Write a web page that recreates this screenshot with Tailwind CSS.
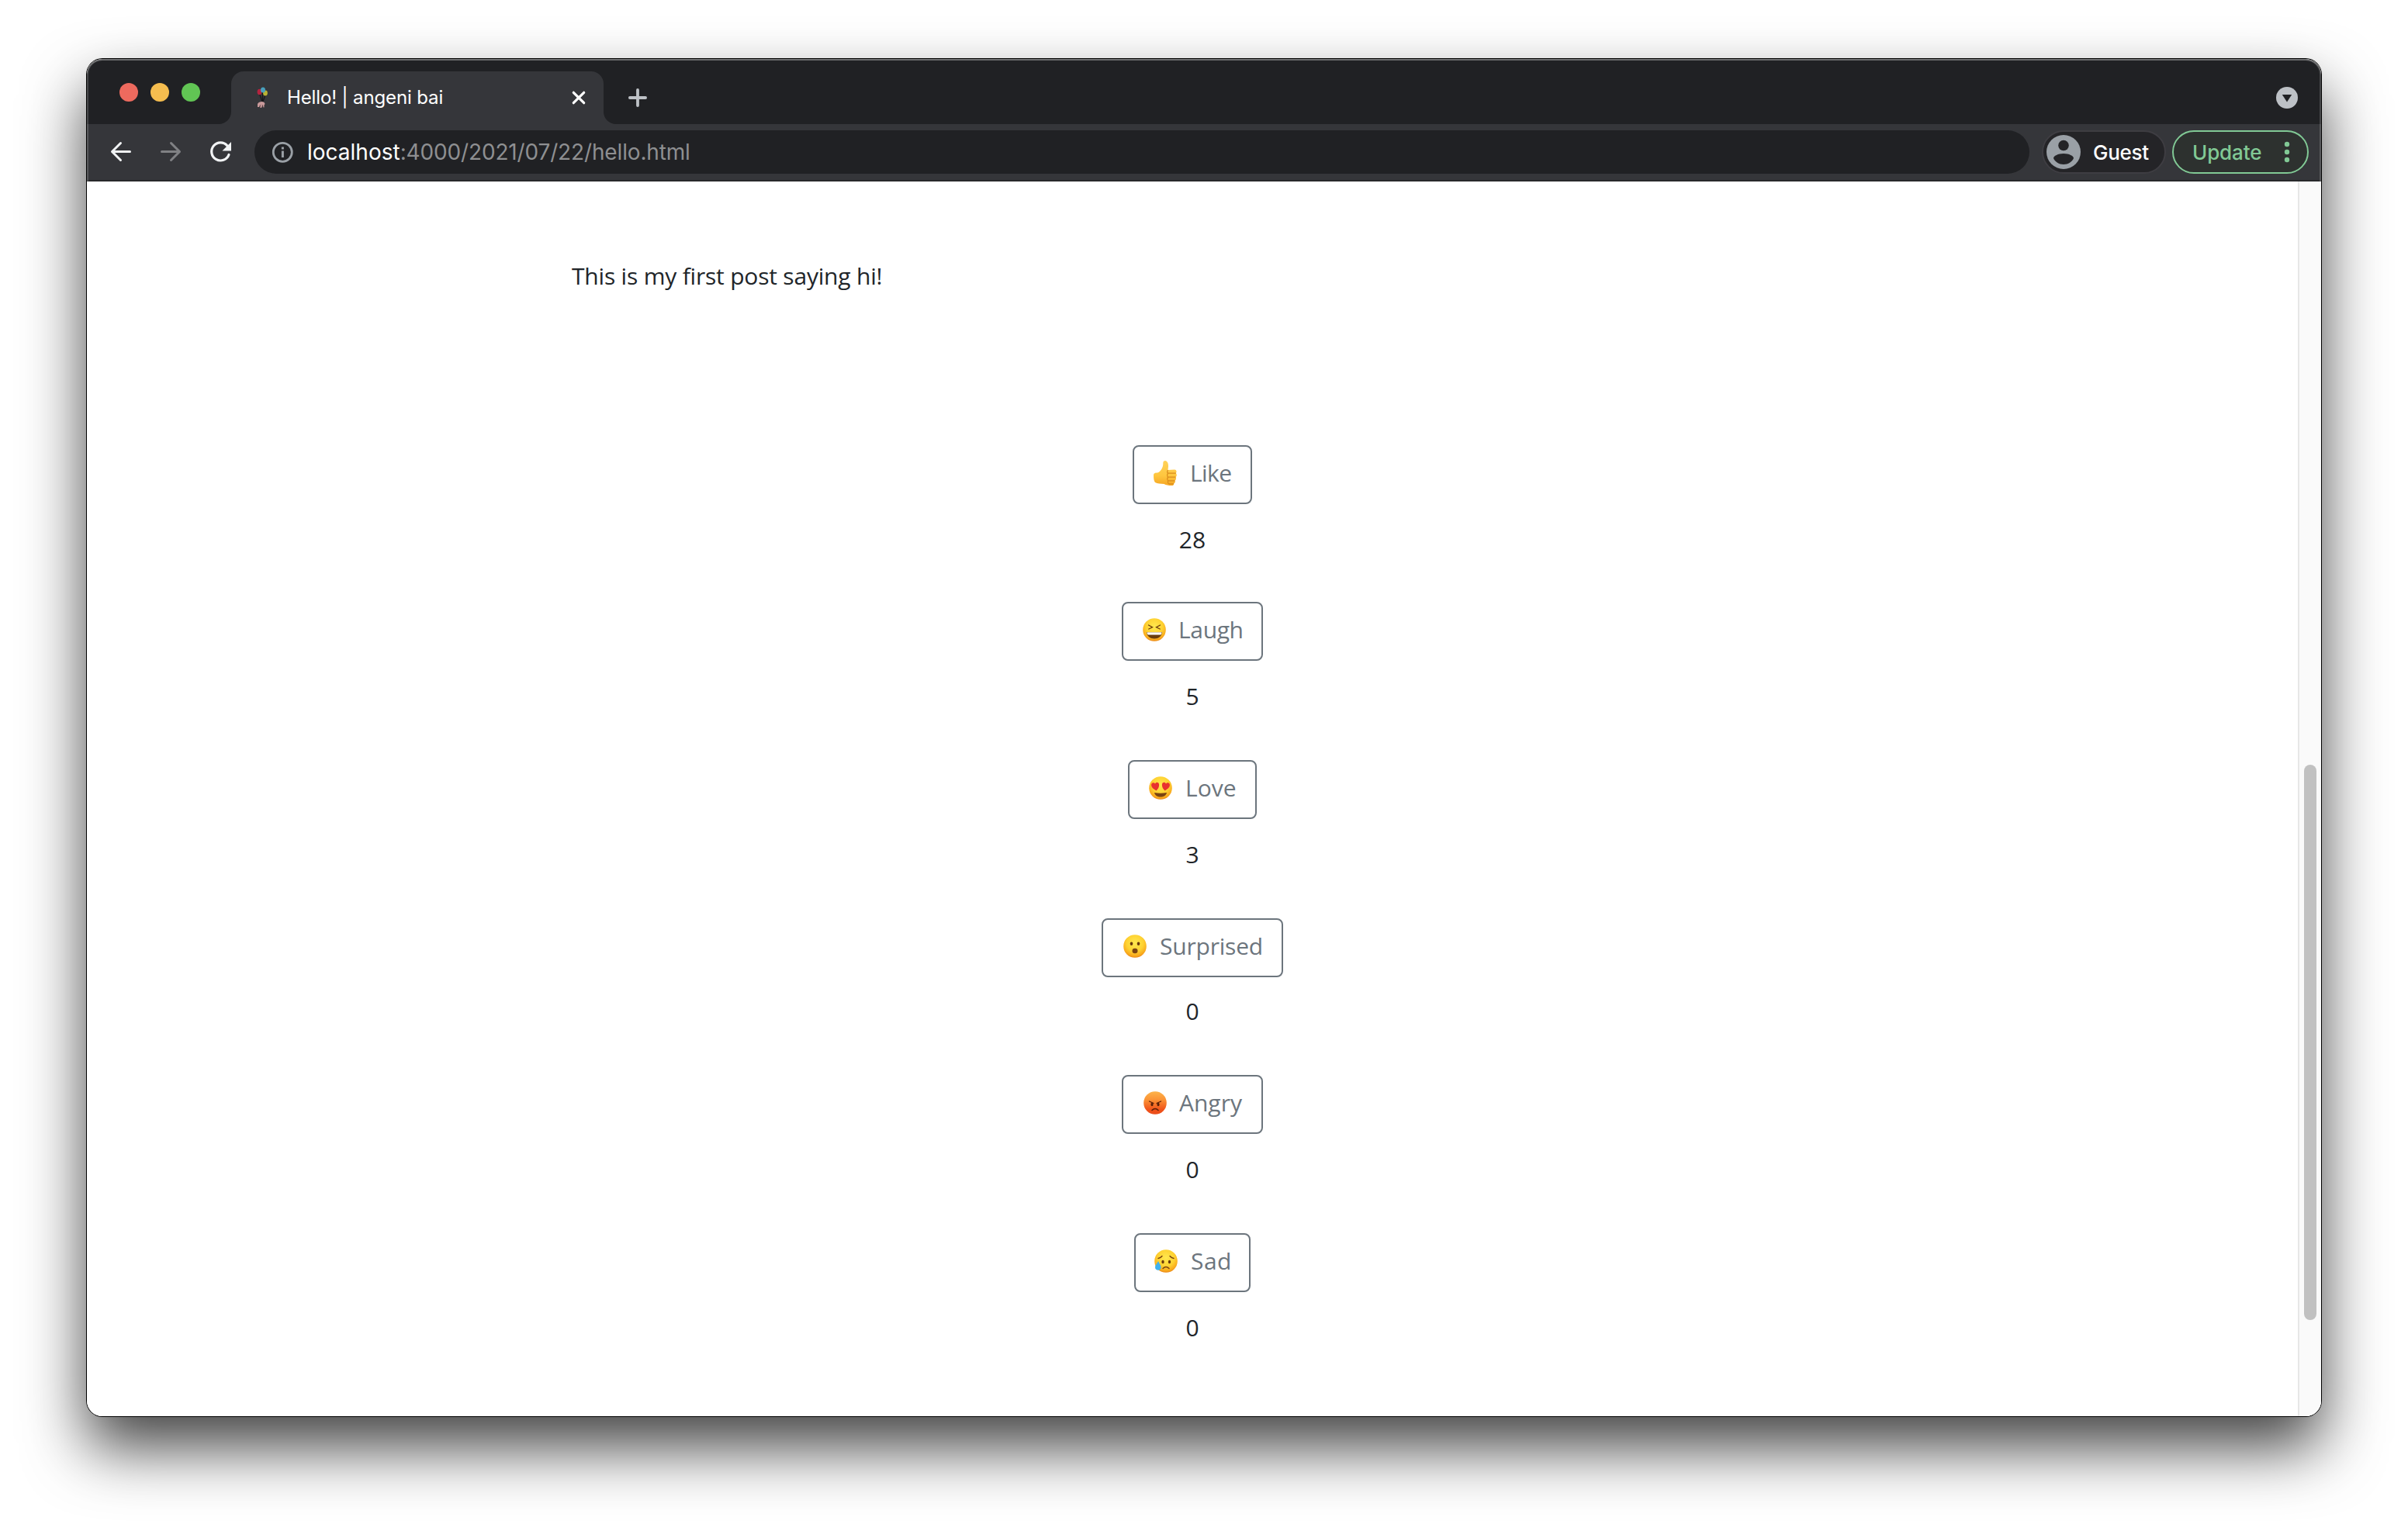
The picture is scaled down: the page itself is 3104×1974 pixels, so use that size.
<!DOCTYPE html>
<html lang="en">
<head>
<meta charset="utf-8">
<title>Hello! | angeni bai</title>
<script src="https://cdn.jsdelivr.net/npm/@tailwindcss/browser@4"></script>
</head>
<body class="w-[3104px] h-[1974px] overflow-hidden bg-white">
<div class="pl-[112px] pt-[76px]">
<div class="relative w-[2880px] h-[1750px] rounded-[20px] shadow-[0_0_0_1px_#000,0_40px_80px_rgba(0,0,0,0.74)]">
<div class="flex flex-col w-full h-full rounded-[20px] overflow-hidden bg-white">

  <!-- Tab strip -->
  <header class="flex h-[84px] shrink-0 bg-[#202124] font-[Inter,sans-serif]">
    <div class="flex gap-4 pl-[42px] pt-[31px] w-[170px] shrink-0">
      <span class="size-6 rounded-full bg-[#ed6a5e]"></span>
      <span class="size-6 rounded-full bg-[#f5bd4f]"></span>
      <span class="size-6 rounded-full bg-[#61c554]"></span>
    </div>
    <svg class="w-4 h-[84px] shrink-0" viewBox="0 0 16 84"><path d="M0 84A16 16 0 0 0 16 68V84Z" fill="#35363a"/></svg>
    <div class="flex items-center mt-4 w-[480px] h-[68px] rounded-t-2xl bg-[#35363a] pl-[32px] pr-[22px]">
      <svg class="w-[18px] h-[32px] shrink-0" viewBox="0 0 18 32">
        <path d="M4.500 11L8 21M8.500 8V21M12.500 11L9 21" stroke="#17171a" stroke-width="1.200" fill="none"/>
        <ellipse cx="4.500" cy="8.500" rx="2.900" ry="3.700" fill="#b3243f"/>
        <ellipse cx="12" cy="10" rx="2.900" ry="3.400" fill="#b9b233"/>
        <ellipse cx="9" cy="6" rx="3" ry="3.500" fill="#48a0bd"/>
        <path d="M2 28V24Q3 21.500 7 21Q11 21 11.500 24L10.500 25.500V28.500H9.500L8.500 25.500L7 29H5.500L5 26L4 28Z" fill="#c99a9b"/>
        <path d="M5 28.500l.5-3.500M8 25l1 3.500" stroke="#5c3d42" stroke-width=".7"/>
      </svg>
      <span class="ml-[22px] w-[210px] text-2xl leading-8 text-white tracking-[-0.130px] whitespace-nowrap">Hello! | angeni bai</span>
      <svg class="ml-auto size-5" viewBox="0 0 20 20"><path d="M3.300 3.300L16.700 16.700M16.700 3.300L3.300 16.700" stroke="#fff" stroke-width="3.200" stroke-linecap="round"/></svg>
    </div>
    <svg class="w-4 h-[84px] shrink-0" viewBox="0 0 16 84"><path d="M16 84A16 16 0 0 1 0 68V84Z" fill="#35363a"/></svg>
    <svg class="ml-4 mt-[38px] size-6" viewBox="0 0 24 24"><path d="M12 1.900V22.100M1.900 12H22.100" stroke="#bdc1c6" stroke-width="3.800" stroke-linecap="round"/></svg>
    <svg class="ml-auto mr-[30px] mt-[36px] size-7" viewBox="0 0 28 28"><circle cx="14" cy="14" r="14" fill="#bdc1c6"/><path d="M7.800 10H20.200L14 19.500Z" fill="#202124"/></svg>
  </header>

  <!-- Toolbar -->
  <nav class="flex items-center h-[74px] shrink-0 bg-[#35363a] border-b-2 border-[#28292b] pl-6 pr-4 font-[Inter,sans-serif]">
    <div class="flex gap-6">
      <svg class="size-10" viewBox="0 0 40 40" fill="none" stroke="#f1f3f4" stroke-width="3" stroke-linecap="round" stroke-linejoin="round"><path d="M31.500 19.500H8.500M19.500 8.500L8.500 19.500L19.500 30.500"/></svg>
      <svg class="size-10" viewBox="0 0 40 40" fill="none" stroke="#808184" stroke-width="3" stroke-linecap="round" stroke-linejoin="round"><path d="M8.500 19.500H31.500M20.500 8.500L31.500 19.500L20.500 30.500"/></svg>
      <svg class="size-10" viewBox="0 0 40 40"><path d="M29 12A11.500 11.500 0 1 0 31 23.500" fill="none" stroke="#f1f3f4" stroke-width="3.200" stroke-linecap="round"/><path d="M34 7V18.500H22.500Z" fill="#f1f3f4"/></svg>
    </div>
    <div class="flex items-center ml-6 w-[2288px] h-14 rounded-full bg-[#202124] pl-[22px]">
      <svg class="size-7" viewBox="0 0 28 28"><circle cx="14.300" cy="14.300" r="12" fill="none" stroke="#9aa0a6" stroke-width="2.800"/><rect x="12.900" y="7.500" width="3" height="3" fill="#9aa0a6"/><rect x="12.900" y="12.500" width="3" height="8.500" fill="#9aa0a6"/></svg>
      <div class="ml-[18px] text-[28px] leading-10 whitespace-pre text-[#8e8f91]"><span class="text-white">localhost</span><span class="tracking-[-0.150px]">:4000/2021/07/22/hello.html</span></div>
    </div>
    <div class="flex items-center ml-4 w-40 h-14 rounded-full border-2 border-[#3e3d42] bg-[#242427] pl-1">
      <svg class="size-11" viewBox="0 0 44 44"><circle cx="22" cy="22" r="22" fill="#9aa0a6"/><circle cx="22" cy="13.500" r="6.800" fill="#242427"/><path d="M9 30C9 27 15 24 22 24S35 27 35 30C33 34.500 28 38 22 38S11 34.500 9 30Z" fill="#242427"/></svg>
      <span class="ml-4 pt-px text-[26px] leading-8 font-medium text-white tracking-[-0.250px]">Guest</span>
    </div>
    <div class="flex items-center ml-2 w-44 h-14 rounded-full border-2 border-[#81c995] bg-[#2d312f] pl-6">
      <span class="pt-px text-[26px] leading-8 text-[#81c995] font-medium tracking-[-0.100px]">Update</span>
      <svg class="ml-auto mr-[22px] w-2 h-8" viewBox="0 0 8 32" fill="#81c995"><circle cx="4" cy="6" r="3.200"/><circle cx="4" cy="16" r="3.200"/><circle cx="4" cy="26" r="3.200"/></svg>
    </div>
  </nav>

  <!-- Page -->
  <div class="flex flex-1 font-['Open_Sans',sans-serif] text-[30px] text-[#212529]">
    <main class="w-[2850px] pt-[98px]">
      <p class="ml-[625px] h-[48px] leading-[48px] tracking-[-0.200px]">This is my first post saying hi!</p>
      <div class="mt-[194px] flex flex-col items-center text-center leading-[48px]">

        <div class="h-[202px]">
          <button class="flex items-center w-[154px] h-[76px] pb-1 pl-[25px] gap-[17px] rounded-lg border-2 border-[#6c757d] text-[#6c757d]">
            <svg class="w-[30px] h-8 shrink-0" viewBox="0 0 30 32">
              <defs><linearGradient id="hand" x1="0" y1="0" x2="0" y2="1"><stop offset="0" stop-color="#ffd25a"/><stop offset=".6" stop-color="#fec63f"/><stop offset="1" stop-color="#f5a623"/></linearGradient></defs>
              <path d="M0 19C0 16 2 15.500 5 15.500C9 14.500 12.500 9 12.300 3C12.300 .8 13.500 0 15 0C18 .3 19.200 4 19 7.500L18.500 12L27 11.500C29.500 11.500 30.300 14.500 28.800 16C30.300 17.500 30 20 28.500 21C29.500 22.500 29 25 27.500 25.500C28.300 27.500 27.500 29 26 29.500C26.500 31 25.500 32 23.500 32C19 32 16 31.500 13.500 30C9 29.500 5 30 2 28C.3 26 0 22.500 0 19Z" fill="url(#hand)"/>
              <path d="M18.500 12C17.500 13.500 17.300 15 18.500 16.200H28.800M18.500 16.200C17.300 18 17.300 19.700 18.500 21.200H28.500M18.500 21.200C17.300 23 17.500 24.500 18.800 25.800H27.500M18.800 25.800C17.800 27.500 18.500 29 20 29.800H26" fill="none" stroke="#d98c1c" stroke-width="1.200"/>
            </svg><span class="tracking-[-0.600px]">Like</span></button>
          <div class="mt-[22px]">28</div>
        </div>

        <div class="h-[204px]">
          <button class="flex items-center w-[182px] h-[76px] pb-1 pl-[25px] gap-4 rounded-lg border-2 border-[#6c757d] text-[#6c757d]">
            <svg class="size-[30px] shrink-0" viewBox="0 0 30 30">
              <defs><radialGradient id="face" cx=".5" cy=".36" r=".66"><stop offset="0" stop-color="#ffe84f"/><stop offset=".55" stop-color="#fed232"/><stop offset=".85" stop-color="#f9a91c"/><stop offset="1" stop-color="#e5801a"/></radialGradient></defs>
              <circle cx="15" cy="15" r="14.800" fill="url(#face)"/>
              <path d="M7.500 9L12.500 11.800L7.800 14M22.500 9L17.500 11.800L22.200 14" fill="none" stroke="#6a3a0c" stroke-width="1.300" stroke-linecap="round"/>
              <path d="M5 18H25C24.500 23.500 20.500 26.500 15 26.500S5.500 23.500 5 18Z" fill="#6b3d0d"/><path d="M5.500 18.300H24.500C24.500 20 24 21.300 23 21.500H7C6 21.300 5.500 20 5.500 18.300Z" fill="#fff"/>
            </svg><span class="tracking-[-0.350px]">Laugh</span></button>
          <div class="mt-[22px]">5</div>
        </div>

        <div class="h-[204px]">
          <button class="flex items-center w-[166px] h-[76px] pb-1 pl-[25px] gap-[17px] rounded-lg border-2 border-[#6c757d] text-[#6c757d]">
            <svg class="size-[30px] shrink-0" viewBox="0 0 30 30">
              <circle cx="15" cy="15" r="14.800" fill="url(#face)"/>
              <path d="M9.500 18.500C5 16 2.500 13 3.200 10.200C4 7.700 7 7.800 8 9.500C9.300 7 12.500 7.500 13 10C13.500 13 12 16 9.500 18.500Z" fill="#e8322f"/>
              <path d="M20.500 18.500C25 16 27.500 13 26.800 10.200C26 7.700 23 7.800 22 9.500C20.700 7 17.500 7.500 17 10C16.500 13 18 16 20.500 18.500Z" fill="#e8322f"/>
              <path d="M7 21C12 22 18 22 23 21C22 25 19 26.500 15 26.500S8 25 7 21Z" fill="#7a4310"/>
            </svg><span>Love</span></button>
          <div class="mt-[22px]">3</div>
        </div>

        <div class="h-[202px]">
          <button class="flex items-center w-[234px] h-[76px] pb-1 pl-[26px] gap-[17px] rounded-lg border-2 border-[#6c757d] text-[#6c757d]">
            <svg class="size-[30px] shrink-0" viewBox="0 0 30 30">
              <circle cx="15" cy="15" r="14.800" fill="url(#face)"/>
              <ellipse cx="10.500" cy="11.800" rx="1.800" ry="2.300" fill="#6a3a0c"/><ellipse cx="19.500" cy="11.800" rx="1.800" ry="2.300" fill="#6a3a0c"/><ellipse cx="15" cy="21" rx="3.500" ry="3.300" fill="#7a4310"/>
            </svg><span class="tracking-[-0.200px]">Surprised</span></button>
          <div class="mt-[20px]">0</div>
        </div>

        <div class="h-[204px]">
          <button class="flex items-center w-[182px] h-[76px] pb-1 pl-[26px] gap-4 rounded-lg border-2 border-[#6c757d] text-[#6c757d]">
            <svg class="size-[30px] shrink-0" viewBox="0 0 30 30">
              <defs><linearGradient id="rage" x1="0" y1="0" x2="0" y2="1"><stop offset="0" stop-color="#fdb44b"/><stop offset=".35" stop-color="#fb9436"/><stop offset=".8" stop-color="#f0521a"/><stop offset="1" stop-color="#ea4c1a"/></linearGradient></defs>
              <circle cx="15" cy="15" r="14.800" fill="url(#rage)"/>
              <path d="M7.500 13L13 15.500M22.500 13L17 15.500" stroke="#5a1f08" stroke-width="1.300" stroke-linecap="round"/>
              <ellipse cx="11" cy="17" rx="1.600" ry="2.200" fill="#5a1f08"/><ellipse cx="19" cy="17" rx="1.600" ry="2.200" fill="#5a1f08"/>
              <path d="M11 24.500Q15 20.500 19 24.500" fill="none" stroke="#5a1f08" stroke-width="1.500" stroke-linecap="round"/>
            </svg><span>Angry</span></button>
          <div class="mt-[22px]">0</div>
        </div>

        <div class="h-[204px]">
          <button class="flex items-center w-[150px] h-[76px] pb-1 pl-[24px] gap-[17px] rounded-lg border-2 border-[#6c757d] text-[#6c757d]">
            <svg class="size-[30px] shrink-0" viewBox="0 0 30 30">
              <circle cx="15" cy="15" r="14.800" fill="url(#face)"/>
              <path d="M5 11.500Q8 11 10 8.500M25 11.500Q22 11 20 8.500M11 24.500Q15 20.500 19 24.500" fill="none" stroke="#7a4310" stroke-width="1.400" stroke-linecap="round"/>
              <ellipse cx="11" cy="16" rx="1.700" ry="2.200" fill="#6a3a0c"/><ellipse cx="19.500" cy="16" rx="1.700" ry="2.200" fill="#6a3a0c"/>
              <path d="M5 15C6.500 18 8.500 20.500 8.500 23C8.500 25.500 7 26.700 5 26.700S1 25.500 1 23C1 20.500 3.500 18 5 15Z" fill="#3fb1ee"/>
            </svg><span class="tracking-[0.500px]">Sad</span></button>
          <div class="mt-[22px]">0</div>
        </div>
      </div>
    </main>

    <!-- Scrollbar -->
    <aside class="w-[30px] bg-[#fafafa] border-l-2 border-[#e7e7e7] pl-[6px] pt-[752px]">
      <div class="w-4 h-[716px] rounded-full bg-[#c1c1c1]"></div>
    </aside>
  </div>
</div>
<!-- Window edge highlight -->
<div class="absolute inset-0 rounded-[20px] pointer-events-none shadow-[inset_0_2px_0_rgba(255,255,255,0.2),inset_0_0_0_2px_rgba(255,255,255,0.18)]"></div>
</div>
</div>
</body>
</html>
